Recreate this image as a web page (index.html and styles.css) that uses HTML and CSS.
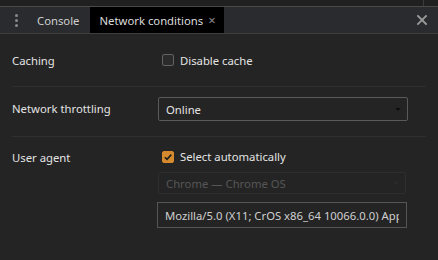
FILE: index.html
```html
<!DOCTYPE html>
<html>
<head>
<meta charset="utf-8">
<link rel="stylesheet" href="styles.css">
</head>
<body>
<div class="topstrip"><div class="topstrip-div"></div></div>
<div class="tabbar">
  <div class="menu-dots"><span></span><span></span><span></span></div>
  <div class="tab">Console</div>
  <div class="tab active">Network conditions<span class="tab-close">×</span></div>
  <div class="spacer"></div>
  <svg class="drawer-close" width="12" height="12" viewBox="0 0 12 12"><path d="M2 2 L10 10 M10 2 L2 10" stroke="#9a9a9a" stroke-width="1.8" stroke-linecap="square"/></svg>
</div>
<div class="content">
  <div class="section s1">
    <div class="label">Caching</div>
    <div class="control">
      <label class="check"><span class="box"></span>Disable cache</label>
    </div>
  </div>
  <div class="section s2">
    <div class="label">Network throttling</div>
    <div class="control">
      <div class="select"><span>Online</span><span class="arrow"></span></div>
    </div>
  </div>
  <div class="section s3">
    <div class="label ua-label">User agent</div>
    <div class="control col">
      <label class="check"><span class="box checked"><svg width="10" height="10" viewBox="0 0 10 10"><path d="M1.8 5.2 L4 7.4 L8.3 2.6" fill="none" stroke="#1e1e1e" stroke-width="1.6"/></svg></span>Select automatically</label>
      <div class="select disabled"><span>Chrome — Chrome OS</span><span class="arrow"></span></div>
      <input class="input" type="text" value="Mozilla/5.0 (X11; CrOS x86_64 10066.0.0) AppleWebKit/537.36 (KHTML, like Gecko) Chrome/79.0.3945.0 Safari/537.36">
    </div>
  </div>
</div>
</body>
</html>
```
FILE: styles.css
```css
html, body {
  margin: 0;
  padding: 0;
}
body {
  width: 438px;
  height: 260px;
  background: #242424;
  font-family: "Noto Sans", "Open Sans", sans-serif;
  font-size: 11.3px;
  color: #e3e3e3;
  overflow: hidden;
}
.topstrip {
  height: 6px;
  background: #202020;
  border-bottom: 1px solid #4a4a4a;
  position: relative;
}
.topstrip-div {
  position: absolute;
  left: 423px;
  top: 0;
  width: 1px;
  height: 6px;
  background: #3a3a3a;
}
.tabbar {
  height: 26px;
  background: #2a2b2e;
  border-bottom: 1px solid #3f3f3f;
  display: flex;
  align-items: stretch;
  white-space: nowrap;
}
.menu-dots {
  width: 30px;
  flex: none;
  display: flex;
  flex-direction: column;
  align-items: center;
  justify-content: center;
  gap: 2px;
  padding-left: 3px;
  box-sizing: border-box;
}
.menu-dots span {
  width: 3px;
  height: 3px;
  background: #8a8a8a;
  border-radius: 50%;
}
.tab {
  flex: none;
  display: flex;
  align-items: center;
  padding: 0 10px 0 7px;
  color: #d0d0d0;
}
.tab.active {
  background: #000;
  color: #dcdcdc;
  padding: 0 8px 0 10px;
  width: 134px;
  box-sizing: border-box;
  justify-content: space-between;
}
.tab-close {
  margin-left: 5px;
  color: #8a8a8a;
  font-size: 13px;
}
.spacer { flex: 1; }
.drawer-close {
  align-self: center;
  margin-right: 10px;
}
.content {
  padding: 0 12px;
}
.section {
  display: flex;
  border-bottom: 1px solid #2f2f2f;
}
.section.s1 {
  height: 52px;
  align-items: center;
}
.section.s2 {
  height: 50px;
  box-sizing: border-box;
  padding-top: 10px;
  align-items: flex-start;
}
.s2 .label {
  line-height: 24px;
}
.section.s3 {
  border-bottom: none;
  padding-top: 12px;
  align-items: flex-start;
}
.label {
  width: 146px;
  flex: none;
  color: #e3e3e3;
}
.ua-label {
  padding-top: 1px;
}
.control {
  flex: 1;
}
.control.col {
  display: flex;
  flex-direction: column;
}
.check {
  display: flex;
  align-items: center;
  margin-left: 4px;
  color: #e3e3e3;
}
.box {
  width: 12px;
  height: 12px;
  box-sizing: border-box;
  border: 1px solid #626262;
  border-radius: 2px;
  background: #2b2b2b;
  margin-right: 6px;
  display: flex;
  align-items: center;
  justify-content: center;
}
.box.checked {
  background: #d58a2e;
  border-color: #d58a2e;
}
.select {
  width: 250px;
  height: 24px;
  box-sizing: border-box;
  border: 1px solid #5a5a5a;
  border-radius: 2px;
  display: flex;
  align-items: center;
  justify-content: space-between;
  padding: 0 6px 0 7px;
  color: #e3e3e3;
}
.arrow {
  width: 0;
  height: 0;
  border-left: 3px solid transparent;
  border-right: 3px solid transparent;
  border-top: 3px solid #0e0e0e;
}
.select.disabled {
  margin-top: 8px;
  width: 248px;
  height: 22px;
  border-color: #2e2e2e;
  color: #565656;
}
.select.disabled .arrow {
  border-top-color: #2a2a2a;
}
.input {
  margin: 8px 0 0 -1px;
  width: 250px;
  height: 26px;
  box-sizing: border-box;
  border: 1px solid #555;
  border-radius: 0;
  background: transparent;
  padding: 0 7px;
  font: inherit;
  color: #cfcfcf;
  outline: none;
}
```
